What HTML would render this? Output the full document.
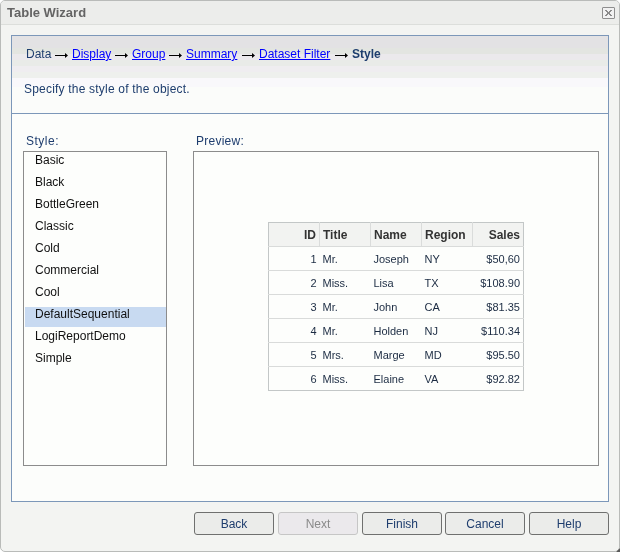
<!DOCTYPE html>
<html><head><meta charset="utf-8">
<style>
*{margin:0;padding:0;box-sizing:border-box}
html,body{width:620px;height:552px;overflow:hidden;background:#ffffff}
body{font-family:"Liberation Sans",sans-serif;font-size:12px;position:relative}
.a{position:absolute;white-space:nowrap;will-change:transform}
#win{position:absolute;left:0;top:0;width:620px;height:552px;background:#f3f4f2;border:1px solid #b9bbb9;border-radius:5px;overflow:hidden}
#title{position:absolute;left:0;top:0;width:618px;height:24px;background:#ecedeb;border-bottom:1px solid #dcdedb}
#close{position:absolute;left:601px;top:6px;width:13px;height:12px;border:1px solid #8e8e8e;border-radius:1px;background:#f1f1f1}
#panel{position:absolute;left:10px;top:34px;width:598px;height:467px;border:1px solid #7c97b9;background:#fcfdfb}
#hdr{position:absolute;left:0;top:0;width:596px;height:77px;background:linear-gradient(#e3e2e4 0px,#e3e2e4 12px,#e3e5e1 12px,#e3e5e1 18px,#ebe9ec 18px,#ebe9ec 24px,#e9ebe8 24px,#e9ebe8 30px,#efedf0 30px,#efedf0 36px,#eef0ed 36px,#eef0ed 42px,#f9f8fb 42px,#f9f8fb 51px,#fbfcfa 51px)}
#hline{position:absolute;left:0;top:77px;width:596px;height:1px;background:#7c97b9}
.lnk{color:#0000ff;text-decoration:underline}
.box{position:absolute;border:1px solid #8c8c8c;background:#fdfefc}
.item{position:absolute;left:11px;color:#111;line-height:14px;will-change:transform}
.btn{will-change:transform;position:absolute;top:512px;width:80px;height:23px;border:1px solid #6f706f;border-radius:3px;background:#ebecea;color:#1e3d6e;text-align:center;line-height:23px}
table{will-change:transform;position:absolute;left:268px;top:222px;border-collapse:collapse;border:1px solid #c3c7c7}
td,th{width:51px;height:24px;padding:0 3px;font-size:11px;color:#1b2b42;border-bottom:1px solid #d9dbda;text-align:left;font-weight:normal}
th{background:#f2f3f1;font-weight:bold;font-size:12px;color:#333;border-right:1px solid #dadcdb}
.r{text-align:right}
.last td{border-bottom-color:#c3c7c7}
</style></head><body>
<div id="win">
  <div id="title"></div>
  <div class="a" style="left:6px;top:4px;font-weight:bold;font-size:13px;color:#646464;line-height:16px">Table Wizard</div>
  <div id="close"><svg width="11" height="10" style="position:absolute;left:0;top:0" fill="#8a8a8a"><path d="M2 2h2v1h-2zM7 2h2v1h-2zM3 3h2v1h-2zM6 3h2v1h-2zM4 4h3v2h-3zM3 6h2v1h-2zM6 6h2v1h-2zM2 7h2v1h-2zM7 7h2v1h-2z"/></svg></div>
  <div id="panel">
    <div id="hdr"></div>
    <div id="hline"></div>
  </div>
</div>
<!-- breadcrumb -->
<div class="a" style="left:26px;top:47px;line-height:14px;color:#1e3d6e">Data</div>
<svg class="a" style="left:0;top:0" width="620" height="80">
  <g fill="#000">
    <rect x="55" y="55" width="11" height="1"/><path d="M65 53L68 55.5L65 58Z"/>
    <rect x="115" y="55" width="11" height="1"/><path d="M125 53L128 55.5L125 58Z"/>
    <rect x="169" y="55" width="11" height="1"/><path d="M179 53L182 55.5L179 58Z"/>
    <rect x="242" y="55" width="11" height="1"/><path d="M252 53L255 55.5L252 58Z"/>
    <rect x="335" y="55" width="11" height="1"/><path d="M345 53L348 55.5L345 58Z"/>
  </g>
</svg>
<div class="a lnk" style="left:72px;top:47px;line-height:14px">Display</div>
<div class="a lnk" style="left:132px;top:47px;line-height:14px">Group</div>
<div class="a lnk" style="left:186px;top:47px;line-height:14px">Summary</div>
<div class="a lnk" style="left:259px;top:47px;line-height:14px">Dataset Filter</div>
<div class="a" style="left:352px;top:47px;line-height:14px;font-weight:bold;color:#1e3d6e">Style</div>
<div class="a" style="left:24px;top:82px;line-height:14px;color:#1e3d6e;letter-spacing:0.2px">Specify the style of the object.</div>

<div class="a" style="left:26px;top:134px;line-height:14px;color:#1e3d6e;letter-spacing:0.5px">Style:</div>
<div class="a" style="left:196px;top:134px;line-height:14px;color:#1e3d6e;letter-spacing:0.25px">Preview:</div>

<div class="box" style="left:23px;top:151px;width:144px;height:315px">
  <div style="position:absolute;left:1px;top:155px;width:141px;height:20px;background:#c8daf1"></div>
  <div class="item" style="top:1px">Basic</div>
  <div class="item" style="top:23px">Black</div>
  <div class="item" style="top:45px">BottleGreen</div>
  <div class="item" style="top:67px">Classic</div>
  <div class="item" style="top:89px">Cold</div>
  <div class="item" style="top:111px">Commercial</div>
  <div class="item" style="top:133px">Cool</div>
  <div class="item" style="top:155px">DefaultSequential</div>
  <div class="item" style="top:177px">LogiReportDemo</div>
  <div class="item" style="top:199px">Simple</div>
</div>
<div class="box" style="left:193px;top:151px;width:406px;height:315px"></div>

<table>
<tr><th class="r">ID</th><th>Title</th><th>Name</th><th>Region</th><th class="r" style="border-right:0">Sales</th></tr>
<tr><td class="r">1</td><td>Mr.</td><td>Joseph</td><td>NY</td><td class="r">$50,60</td></tr>
<tr><td class="r">2</td><td>Miss.</td><td>Lisa</td><td>TX</td><td class="r">$108.90</td></tr>
<tr><td class="r">3</td><td>Mr.</td><td>John</td><td>CA</td><td class="r">$81.35</td></tr>
<tr><td class="r">4</td><td>Mr.</td><td>Holden</td><td>NJ</td><td class="r">$110.34</td></tr>
<tr><td class="r">5</td><td>Mrs.</td><td>Marge</td><td>MD</td><td class="r">$95.50</td></tr>
<tr class="last"><td class="r">6</td><td>Miss.</td><td>Elaine</td><td>VA</td><td class="r">$92.82</td></tr>
</table>

<div class="btn" style="left:194px">Back</div>
<div class="btn" style="left:278px;border-color:#c6c6c6;background:#ebe9ec;color:#8a8a8a">Next</div>
<div class="btn" style="left:362px">Finish</div>
<div class="btn" style="left:445px">Cancel</div>
<div class="btn" style="left:529px">Help</div>
<svg class="a" style="left:614px;top:546px" width="6" height="6"><path d="M6 2V6H2Z" fill="#5a5a5a"/></svg>
</body></html>
